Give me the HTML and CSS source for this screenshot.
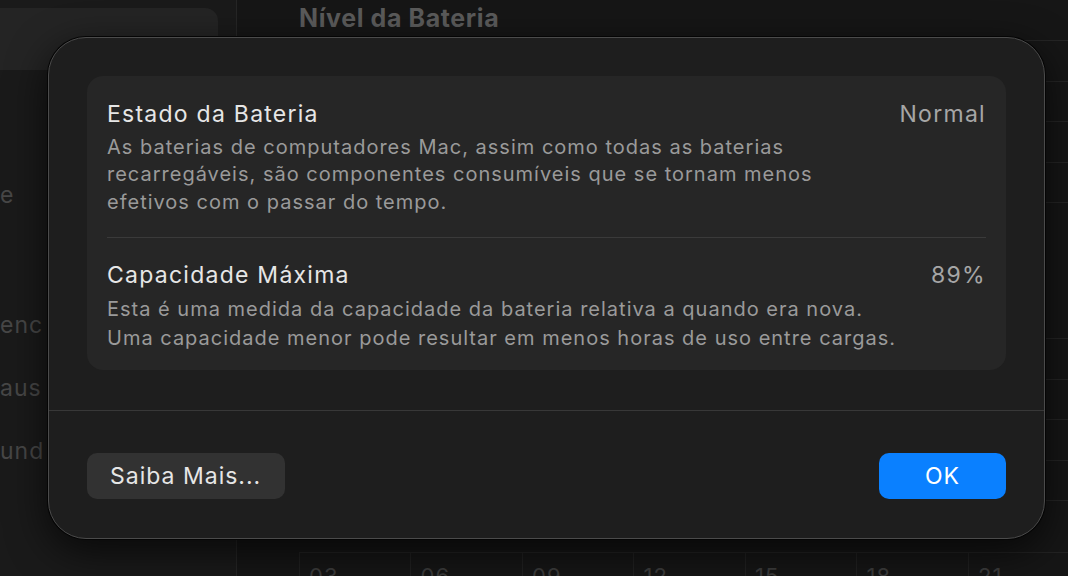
FILE: index.html
```html
<!DOCTYPE html>
<html lang="pt">
<head>
<meta charset="utf-8">
<title>Estado da Bateria</title>
<link rel="stylesheet" href="styles.css">
</head>
<body>
<div class="window">
  <aside class="sidebar">
    <div class="side-selected"></div>
    <ul class="side-list">
      <li class="side-item"></li>
      <li class="side-item side-item-up">e</li>
      <li class="side-item"></li>
      <li class="side-item">enc</li>
      <li class="side-item">aus</li>
      <li class="side-item">und</li>
    </ul>
  </aside>
  <div class="vsep"></div>
  <main class="main">
    <h1 class="heading">Nível da Bateria</h1>
    <div class="chart chart-top">
      <div class="gline"></div><div class="gline"></div><div class="gline"></div><div class="gline"></div><div class="gline"></div>
    </div>
    <div class="chart chart-bottom">
      <div class="gline"></div><div class="gline"></div><div class="gline"></div><div class="gline"></div><div class="gline"></div>
    </div>
    <div class="axis">
      <span class="tick">03</span><span class="tick">06</span><span class="tick">09</span><span class="tick">12</span><span class="tick">15</span><span class="tick">18</span><span class="tick">21</span>
    </div>
  </main>
</div>

<div class="sheet">
  <div class="sheet-body">
    <div class="card">
      <section class="row row-first">
        <div class="row-head">
          <span class="row-title">Estado da Bateria</span>
          <span class="row-value">Normal</span>
        </div>
        <p class="row-desc">As baterias de computadores Mac, assim como todas as baterias<br>recarregáveis, são componentes consumíveis que se tornam menos<br>efetivos com o passar do tempo.</p>
      </section>
      <div class="divider"></div>
      <section class="row row-last">
        <div class="row-head">
          <span class="row-title">Capacidade Máxima</span>
          <span class="row-value">89%</span>
        </div>
        <p class="row-desc">Esta é uma medida da capacidade da bateria relativa a quando era nova.<br>Uma capacidade menor pode resultar em menos horas de uso entre cargas.</p>
      </section>
    </div>
  </div>
  <div class="sheet-footer">
    <button class="btn btn-secondary">Saiba Mais...</button>
    <button class="btn btn-primary">OK</button>
  </div>
</div>
</body>
</html>
```
FILE: styles.css
```css
* { box-sizing: border-box; }
html, body {
  margin: 0;
  padding: 0;
}
body {
  width: 1068px;
  height: 576px;
  overflow: hidden;
  background: #161616;
  font-family: Inter, "Noto Sans", "Liberation Sans", sans-serif;
  position: relative;
}

.window {
  display: grid;
  grid-template-columns: 236px 1px 1fr;
  height: 576px;
}

.sidebar {
  background: #1a1a1a;
  padding: 8px 18px 0 0;
}
.side-selected {
  height: 62px;
  background: #242424;
  border-radius: 0 13px 13px 0;
}
.side-list {
  list-style: none;
  margin: 35px 0 0;
  padding: 0;
}
.side-item {
  height: 63px;
  line-height: 63px;
  font-size: 23px;
  letter-spacing: 1px;
  color: #474747;
  white-space: nowrap;
}
.side-item-up { line-height: 55px; }

.vsep { background: #262626; }

.main {
  padding-left: 62px;
  display: flex;
  flex-direction: column;
  overflow: hidden;
}
.heading {
  margin: 0;
  height: 40px;
  flex: none;
  line-height: 36px;
  font-size: 25px;
  font-weight: 700;
  letter-spacing: 0.6px;
  color: #5b5b5b;
}
.chart {
  display: flex;
  flex-direction: column;
  flex: none;
}
.gline {
  height: 40.5px;
  flex: none;
  border-top: 1px solid #252525;
}
.chart-bottom { margin-top: 95.5px; }
.axis {
  flex: none;
  margin-top: 11.5px;
  border-top: 1px solid #232323;
  display: flex;
  height: 40px;
  padding-top: 8px;
  background-image: repeating-linear-gradient(to right, #212121 0 1px, transparent 1px 111.5px);
}
.tick {
  width: 111.5px;
  flex: none;
  padding-left: 10px;
  font-size: 22px;
  line-height: 30px;
  letter-spacing: 1px;
  color: #3c3c3c;
}

/* Sheet dialog overlay */
.sheet {
  position: absolute;
  left: 48px;
  top: 37px;
  width: 997px;
  height: 502px;
  background: #1e1e1e;
  border: 1px solid #4b4b4b;
  border-radius: 38px;
  box-shadow: 0 0 0 1px #050505, 0 12px 40px rgba(0, 0, 0, 0.7);
  display: flex;
  flex-direction: column;
}
.sheet-body {
  padding: 38px 38px 40px 38px;
}
.card {
  background: #262626;
  border-radius: 16px;
}
.row {
  padding: 23.5px 20px 19px;
}
.row-first { padding-bottom: 20.5px; }
.row-first .row-head { margin-bottom: 6px; }
.row-last { padding-top: 23.5px; padding-bottom: 17px; }
.row-last .row-head { margin-bottom: 6px; }
.row-head {
  display: flex;
  justify-content: space-between;
  align-items: baseline;
  line-height: 28px;
  font-size: 23px;
  margin-bottom: 7.5px;
}
.row-title {
  color: #e6e6e6;
  letter-spacing: 1.25px;
}
.row-value {
  color: #a6a6a6;
  letter-spacing: 1.3px;
}
.row-desc {
  margin: 0;
  font-size: 20px;
  line-height: 27.5px;
  letter-spacing: 1px;
  color: #9a9a9a;
}
.row-last .row-desc { line-height: 29px; }
.divider {
  margin: 0 20px;
  border-top: 1px solid #3a3a3a;
}

.sheet-footer {
  border-top: 1px solid #383838;
  padding: 42px 38px 0 38px;
  display: flex;
  justify-content: space-between;
}
.btn {
  height: 46px;
  border: none;
  border-radius: 10px;
  font-family: Inter, "Noto Sans", "Liberation Sans", sans-serif;
  font-size: 23px;
  letter-spacing: 1px;
  padding: 0;
}
.btn-secondary {
  width: 198px;
  background: #323232;
  color: #e6e6e6;
  text-align: left;
  padding-left: 23px;
}
.btn-primary {
  width: 127px;
  background: #0a80ff;
  color: #ffffff;
}
```
